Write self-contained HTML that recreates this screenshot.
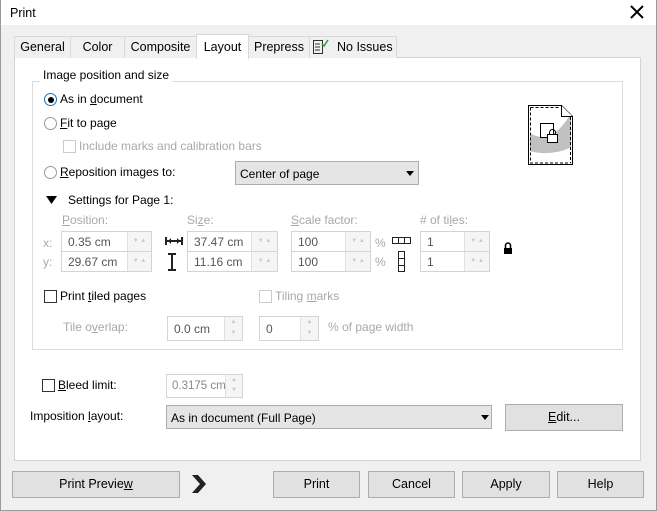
<!DOCTYPE html>
<html><head><meta charset="utf-8"><style>
*{box-sizing:border-box;margin:0;padding:0}
body{width:657px;height:511px;overflow:hidden;background:#f0f0f0;font-family:"Liberation Sans",sans-serif;font-size:12px;color:#000;position:relative}
.a{position:absolute;white-space:nowrap}
.g{color:#a8a8a8}
.tab{position:absolute;top:36px;height:22px;background:#f0f0f0;border:1px solid #d9d9d9;border-bottom:none;text-align:center;line-height:20px;font-size:12.5px}
.box{position:absolute;background:#fff;border:1px solid #d4d4d4;height:21px}
.box span{position:absolute;left:6px;top:3px;color:#555}
.arr{position:absolute;top:0;bottom:0;right:0;background:#f5f5f5;border-left:1px solid #e0e0e0;font-size:6px;color:#c8c8c8;text-align:center;line-height:19px}
.cb{position:absolute;width:13px;height:13px;border:1px solid #333;background:#fff}
.cbg{border-color:#ccc}
.rd{position:absolute;width:13px;height:13px;border:1px solid #333;border-radius:50%;background:#fff}
.btn{position:absolute;background:#e1e1e1;border:1px solid #adadad;text-align:center;font-size:12.5px}
.combo{position:absolute;background:#e5e5e5;border:1px solid #adadad}
u{text-decoration:underline}
</style></head><body>
<div class="a" style="left:0;top:0;width:657px;height:25px;background:#fff"></div>
<div class="a" style="left:0;top:0;width:657px;height:511px;border:1px solid #9a9a9a;border-top:none"></div>
<div class="a" style="left:10px;top:6px;font-size:12.5px">Print</div>
<svg class="a" style="left:630px;top:5px" width="14" height="14"><path d="M1 1L13 13M13 1L1 13" stroke="#000" stroke-width="2"/></svg>

<div class="a" style="left:14px;top:57px;width:627px;height:404px;background:#fff;border:1px solid #d4d4d4"></div>
<div class="tab" style="left:14px;width:57px">General</div>
<div class="tab" style="left:70px;width:55px">Color</div>
<div class="tab" style="left:124px;width:73px">Composite</div>
<div class="tab" style="left:196px;width:53px;top:34px;height:25px;background:#fff;line-height:24px">Layout</div>
<div class="tab" style="left:248px;width:62px">Prepress</div>
<div class="tab" style="left:309px;width:88px;text-align:left;padding-left:27px">No Issues</div>
<svg class="a" style="left:312px;top:38px" width="18" height="18"><rect x="1.5" y="2.5" width="9" height="13" fill="none" stroke="#333"/><path d="M3 6h5M3 9h5M3 12h5" stroke="#333"/><path d="M10 6l2 2 4-6" stroke="#2a9a3a" stroke-width="1.5" fill="none"/></svg>

<div class="a" style="left:32px;top:81px;width:591px;height:269px;border:1px solid #dcdcdc"></div>
<div class="a" style="left:40px;top:68px;background:#fff;padding:0 3px">Image position and size</div>

<div class="rd" style="left:44px;top:93px;border-color:#0078d7"></div><div class="a" style="left:47.5px;top:96.5px;width:6px;height:6px;border-radius:50%;background:#000"></div>
<div class="a" style="left:60px;top:92px">As in <u>d</u>ocument</div>
<div class="rd" style="left:44px;top:117px;border-color:#999"></div>
<div class="a" style="left:60px;top:116px"><u>F</u>it to page</div>
<div class="cb cbg" style="left:63px;top:140px"></div>
<div class="a g" style="left:79px;top:139px">Include marks and calibration bars</div>
<div class="rd" style="left:44px;top:166px;border-color:#999"></div>
<div class="a" style="left:60px;top:165px"><u>R</u>eposition images to:</div>
<div class="combo" style="left:235px;top:161px;width:184px;height:24px"><span class="a" style="left:4px;top:5px">Center of page</span><svg class="a" style="left:170px;top:9px" width="8" height="5"><path d="M0 0h8L4 5z"/></svg></div>

<svg class="a" style="left:46px;top:196px" width="11" height="8"><path d="M0 0h11L5.5 8z"/></svg>
<div class="a" style="left:68px;top:193px">Settings for Page 1:</div>
<div class="a g" style="left:62px;top:213px"><u>P</u>osition:</div>
<div class="a g" style="left:187px;top:213px">Si<u>z</u>e:</div>
<div class="a g" style="left:291px;top:213px"><u>S</u>cale factor:</div>
<div class="a g" style="left:420px;top:213px"># of ti<u>l</u>es:</div>
<div class="a g" style="left:43px;top:236px">x:</div><div class="a g" style="left:43px;top:255px">y:</div>

<div class="box" style="left:61px;top:231px;width:91px"><span>0.35 cm</span><div class="arr" style="width:24px">▼ ▲</div></div>
<div class="box" style="left:61px;top:251px;width:91px"><span>29.67 cm</span><div class="arr" style="width:24px">▼ ▲</div></div>
<div class="box" style="left:187px;top:231px;width:91px"><span>37.47 cm</span><div class="arr" style="width:26px">▼ ▲</div></div>
<div class="box" style="left:187px;top:251px;width:91px"><span>11.16 cm</span><div class="arr" style="width:26px">▼ ▲</div></div>
<div class="box" style="left:291px;top:231px;width:80px"><span>100</span><div class="arr" style="width:25px">▼ ▲</div></div>
<div class="box" style="left:291px;top:251px;width:80px"><span>100</span><div class="arr" style="width:25px">▼ ▲</div></div>
<div class="box" style="left:420px;top:231px;width:70px"><span>1</span><div class="arr" style="width:25px">▼ ▲</div></div>
<div class="box" style="left:420px;top:251px;width:70px"><span>1</span><div class="arr" style="width:25px">▼ ▲</div></div>
<svg class="a" style="left:165px;top:237px" width="18" height="9"><path d="M1 0v8M17 0v8M1 4h16" stroke="#222" stroke-width="2"/><path d="M3 4l3-3v6zM15 4l-3-3v6z" fill="#222"/></svg>
<svg class="a" style="left:168px;top:253px" width="9" height="18"><path d="M0 1h8M0 17h8M4 1v16" stroke="#222" stroke-width="2"/></svg>
<div class="a g" style="left:375px;top:236px">%</div><div class="a g" style="left:375px;top:255px">%</div>
<svg class="a" style="left:392px;top:237px" width="19" height="8"><rect x=".5" y=".5" width="18" height="6" fill="none" stroke="#222"/><path d="M6.5 0v7M12.5 0v7" stroke="#222"/></svg>
<svg class="a" style="left:398px;top:251px" width="8" height="21"><rect x=".5" y=".5" width="6" height="20" fill="none" stroke="#222"/><path d="M0 7.5h7M0 14.5h7" stroke="#222"/></svg>
<svg class="a" style="left:503px;top:242px" width="10" height="13"><path d="M2.5 6V3.5a2.5 2.5 0 0 1 5 0V6" fill="none" stroke="#000" stroke-width="1.5"/><rect x="1" y="6" width="8" height="6" fill="#000"/></svg>

<div class="cb" style="left:44px;top:290px"></div>
<div class="a" style="left:60px;top:289px">Print <u>t</u>iled pages</div>
<div class="cb cbg" style="left:259px;top:290px"></div>
<div class="a g" style="left:275px;top:289px">Tiling <u>m</u>arks</div>
<div class="a g" style="left:63px;top:320px">Tile o<u>v</u>erlap:</div>
<div class="box" style="left:167px;top:316px;width:76px;height:25px"><span style="top:5px">0.0 cm</span><div class="arr" style="width:18px;line-height:11px">▲<br>▼</div></div>
<div class="box" style="left:259px;top:316px;width:60px;height:25px"><span style="top:5px">0</span><div class="arr" style="width:18px;line-height:11px">▲<br>▼</div></div>
<div class="a g" style="left:328px;top:320px">% of page width</div>

<div class="cb" style="left:42px;top:379px"></div>
<div class="a" style="left:58px;top:378px"><u>B</u>leed limit:</div>
<div class="box" style="left:166px;top:374px;width:77px;height:24px"><span style="top:5px;left:5px;font-size:11.5px;color:#888">0.3175 cm</span><div class="arr" style="width:17px;line-height:10px">▲<br>▼</div></div>
<div class="a" style="left:30px;top:409px">Imposition <u>l</u>ayout:</div>
<div class="combo" style="left:166px;top:405px;width:326px;height:24px"><span class="a" style="left:4px;top:5px">As in document (Full Page)</span><svg class="a" style="left:314px;top:9px" width="8" height="5"><path d="M0 0h8L4 5z"/></svg></div>
<div class="btn" style="left:505px;top:404px;width:118px;height:27px;line-height:25px"><u>E</u>dit...</div>

<div class="btn" style="left:12px;top:471px;width:168px;height:27px;line-height:25px">Print Previe<u>w</u></div>
<svg class="a" style="left:192px;top:475px" width="16" height="18"><path d="M0 0l6 0 8 9-8 9h-6l8-9z" fill="#222"/></svg>
<div class="btn" style="left:273px;top:471px;width:87px;height:27px;line-height:25px">Print</div>
<div class="btn" style="left:368px;top:471px;width:87px;height:27px;line-height:25px">Cancel</div>
<div class="btn" style="left:462px;top:471px;width:88px;height:27px;line-height:25px">Apply</div>
<div class="btn" style="left:557px;top:471px;width:87px;height:27px;line-height:25px">Help</div>

<svg class="a" style="left:526px;top:103px" width="50" height="65">
<path d="M2.5 2.5h33l11 11v48h-44z" fill="#fff" stroke="#000"/>
<path d="M4 30c12 8 28 4 41-20v34c-10 6-28 8-41 4z" fill="#c0c0c0"/>
<path d="M4.5 4.5h30M44.5 14v46M4.5 4.5v55.5h40" fill="none" stroke="#000" stroke-dasharray="3,2"/>
<path d="M35.5 2.5v11h11" fill="#fff" stroke="#000"/>
<rect x="14.5" y="20.5" width="13" height="14" fill="#fff" stroke="#000"/>
<rect x="21.5" y="31.5" width="10" height="8" fill="#fff" stroke="#000"/>
<path d="M23.5 31.5v-2a3 3 0 0 1 6 0v2" fill="none" stroke="#000"/>
</svg>
</body></html>
